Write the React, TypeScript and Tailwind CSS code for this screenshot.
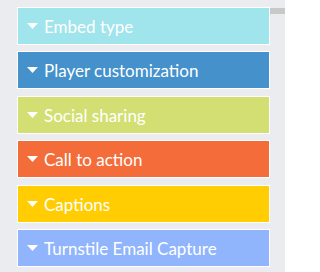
const sections = [
  { label: "Embed type", bg: "bg-[#a0e4ec]" },
  { label: "Player customization", bg: "bg-[#4491cc]" },
  { label: "Social sharing", bg: "bg-[#d3df72]" },
  { label: "Call to action", bg: "bg-[#f46c39]" },
  { label: "Captions", bg: "bg-[#ffcd02]" },
  { label: "Turnstile Email Capture", bg: "bg-[#90b5fc]" },
];

export default function App() {
  return (
    <div className="w-[285px] h-[272px] bg-[#ebecf0] flex items-start pt-[7px] pl-[17px] font-['Lato',sans-serif] overflow-hidden">
      <div className="w-[253px] flex flex-col gap-[6.4px]">
        {sections.map((s) => (
          <div
            key={s.label}
            className={`${s.bg} h-[38px] border border-white flex items-center pl-[9px] gap-[6px] text-white text-[17px]`}
          >
            <svg width="11" height="6" viewBox="0 0 11 6" className="shrink-0">
              <path d="M0 0h11L5.5 6z" fill="#fff" />
            </svg>
            <span className="leading-none pt-[1px]">{s.label}</span>
          </div>
        ))}
      </div>
      <div className="w-[15px] h-[6px] bg-[#c8c8c8] mt-[1px]" />
    </div>
  );
}
